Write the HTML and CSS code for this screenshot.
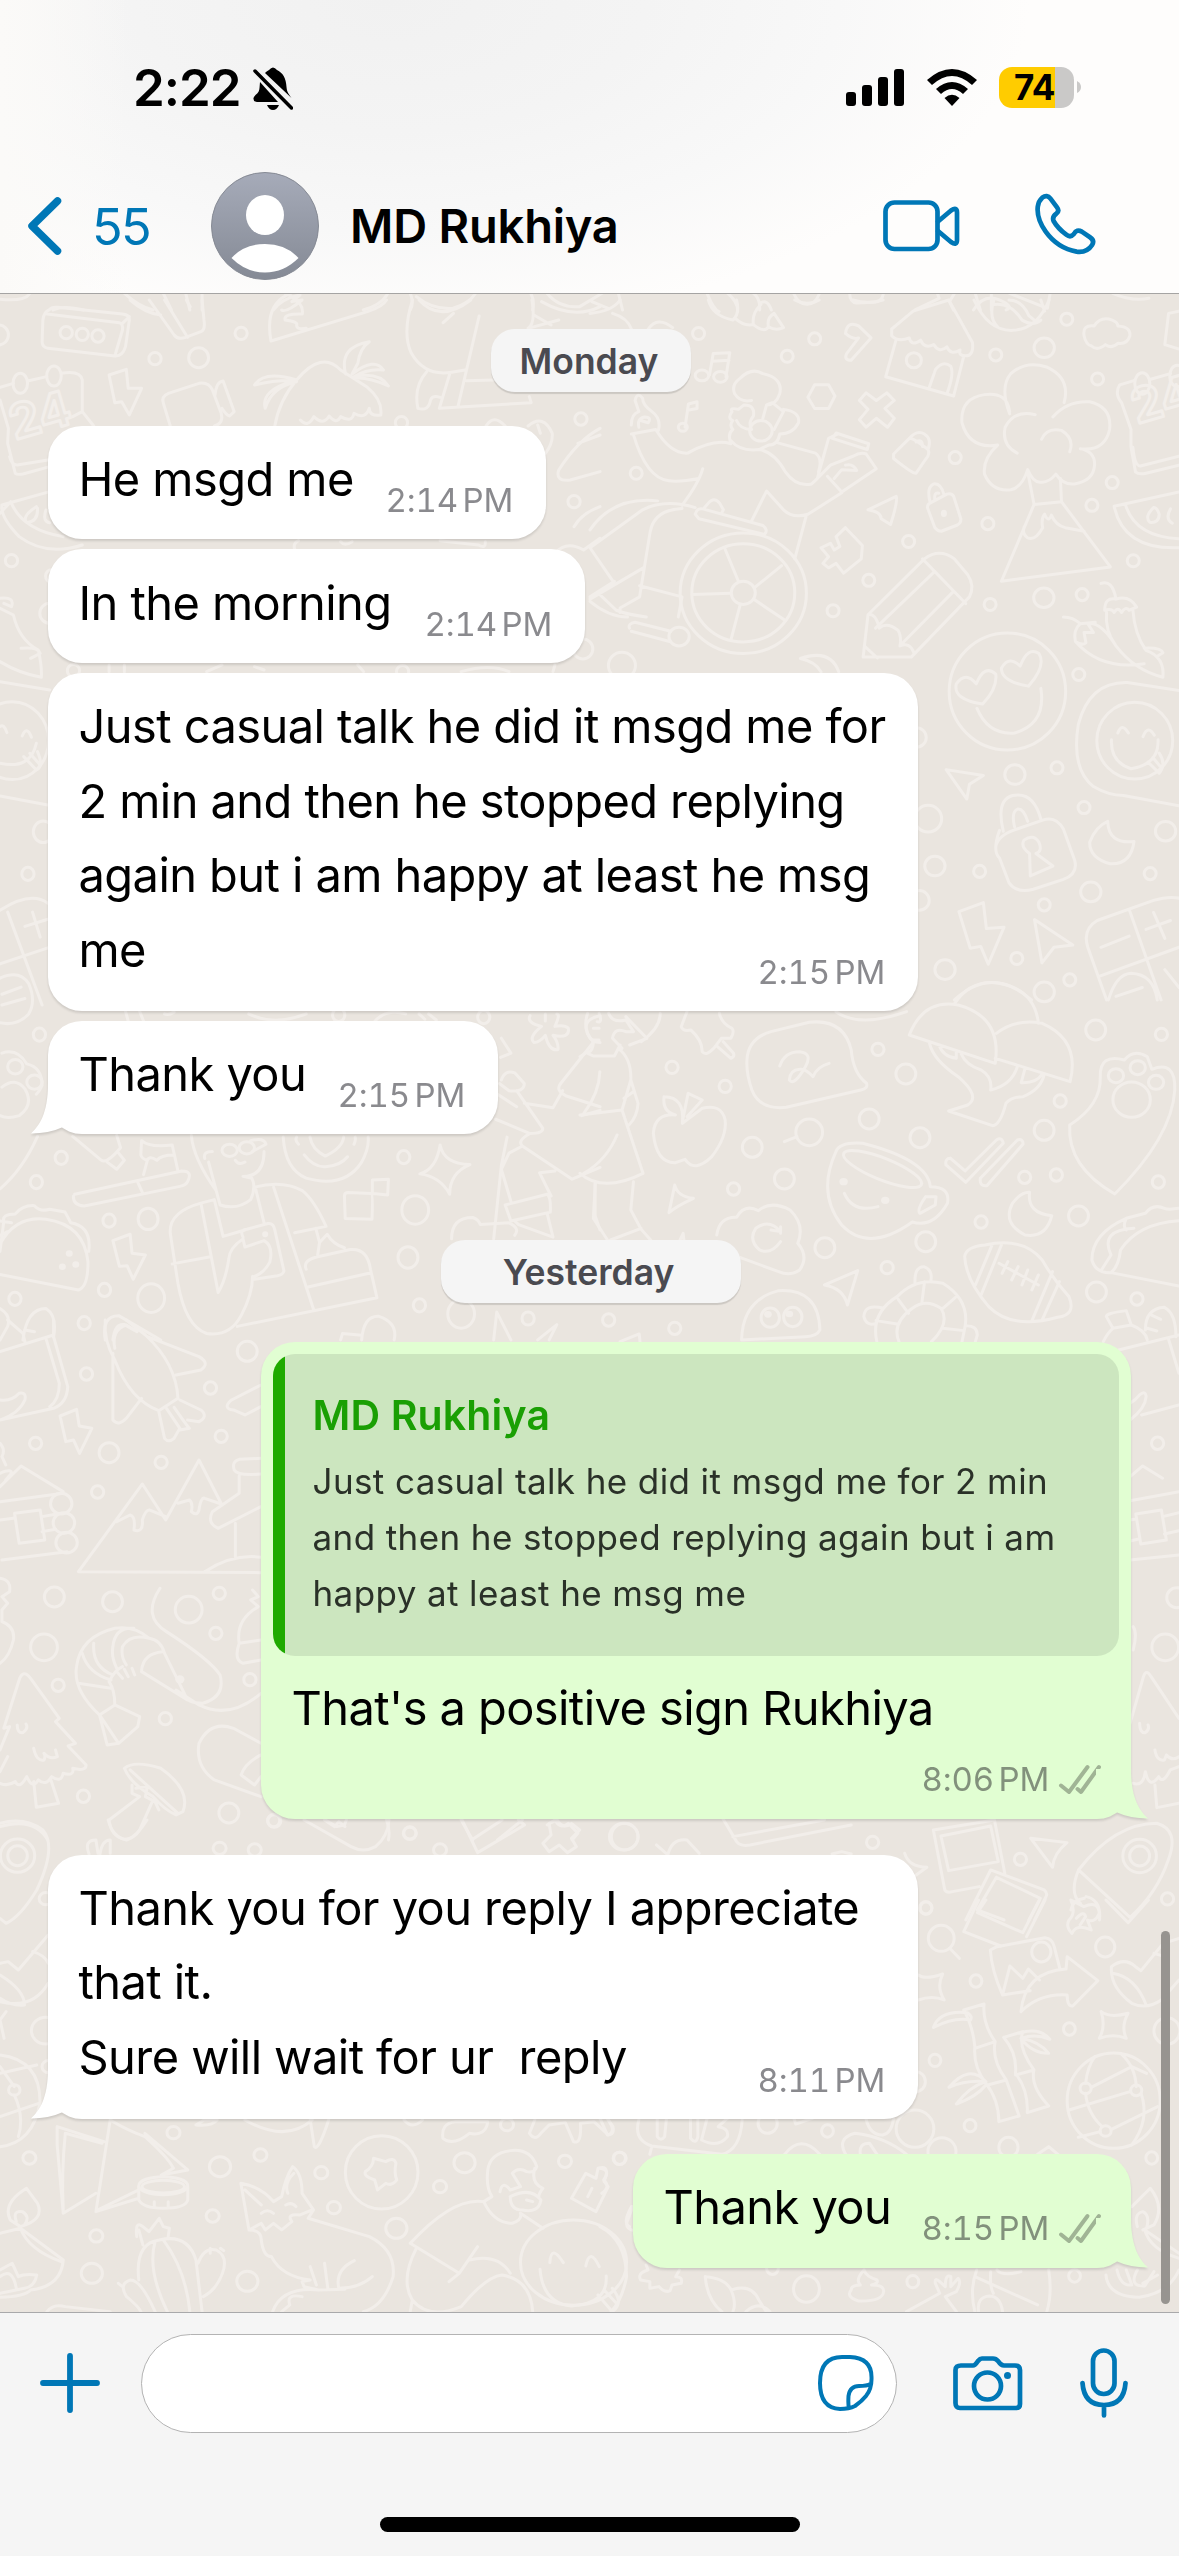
FILE: index.html
```html
<!DOCTYPE html>
<html lang="en">
<head>
<meta charset="utf-8">
<title>MD Rukhiya</title>
<link rel="stylesheet" href="styles.css">
</head>
<body>
<div class="screen">
  <header class="top">
    <div class="status">
      <span class="clock">2:22</span>
      <svg class="bell" viewBox="0 0 40 43" width="40" height="43"><path d="M12 6C14 4 15 3.500 16 3Q20-2 24 3C30 6 33 11 33.500 20C34 26 36 27 38.500 31ZM7 15L25 35H4Q0 35 .5 31C3 26 6 27 6.500 21ZM14 38H26Q24 43 20 43T14 38Z"/><path class="slash" d="M2 4L38.500 41"/></svg>
      <svg class="signal" viewBox="0 0 58 37" width="58" height="37"><rect y="23" width="10" height="14" rx="3"/><rect x="16" y="16" width="10" height="21" rx="3"/><rect x="32" y="8" width="10" height="29" rx="3"/><rect x="48" width="10" height="37" rx="3"/></svg>
      <svg class="wifi" viewBox="0 0 50 37" width="50" height="37"><path d="M0 11Q25-11 50 11L45 16Q25-2 5 16ZM9 20Q25 6 41 20L36 25Q25 15 14 25ZM17.500 29Q25 22.500 32.500 29L25 37Z"/></svg>
      <div class="battery"><span class="battery-label">74</span></div>
      <svg class="nub" viewBox="0 0 4 12" width="4" height="12"><path d="M0 0Q4 2 4 6T0 12Z"/></svg>
    </div>
    <div class="nav">
      <svg class="back" viewBox="0 0 34 58" width="34" height="58"><path d="M29.500 4L4 29L29.500 54"/></svg>
      <span class="count">55</span>
      <svg class="avatar" viewBox="0 0 108 108" width="108" height="108">
        <defs><linearGradient id="av" x2="0" y2="1"><stop stop-color="#a6abb9"/><stop offset="1" stop-color="#858a95"/></linearGradient></defs>
        <circle cx="54" cy="54" r="53.500" fill="url(#av)" stroke="#868a94"/>
        <ellipse cx="54" cy="43" rx="19" ry="20" fill="#fff"/>
        <path d="M20.500 86Q33 72 54 72T87.500 86Q73 100.500 54 100.500T20.500 86Z" fill="#fff"/>
      </svg>
      <span class="name">MD Rukhiya</span>
      <svg class="line-icon video" viewBox="883 198 77 52" width="77" height="52"><rect x="885.500" y="200.500" width="52" height="46.500" rx="9"/><path d="M938 219.500L951 208.500Q957 204.500 957 210.500V238Q957 244 951 240L938 229"/></svg>
      <svg class="line-icon phone" viewBox="1034 193 63 63" width="63" height="63"><g transform="matrix(.3438 0 0 .3333 640 0)"><path d="M1157 620Q1159 603 1170 593Q1184 582 1194 596L1213 622Q1221 633 1211 641Q1198 651 1203 663Q1215 685 1240 704Q1252 714 1262 702Q1270 686 1285 695L1309 712Q1323 722 1315 735Q1300 759 1270 755Q1215 745 1180 695Q1153 655 1157 620Z"/></g></svg>
    </div>
  </header>

  <main class="chat">
    <svg class="doodles" viewBox="0 294 1179 2018" width="1179" height="2018" aria-hidden="true">
      <defs>
        <ellipse id="s" rx="16" ry="18.500"/><ellipse id="m" rx="26" ry="30"/><ellipse id="l" rx="35" ry="40"/>
        <ellipse id="s4" rx="16" ry="13.500"/><ellipse id="m4" rx="27" ry="22"/>
        <path id="bolt" d="M0 17L45 0L50 57L85 57L53 137L33 97L15 100Z"/>
      </defs>
      <g transform="matrix(.4082 0 0 .3333 0 0)">
        <path d="M0 898Q60 905 72 882M130 930Q155 915 205 930M305 880Q340 920 375 930M400 880L420 930M455 880L465 930M495 880V930M670 930Q690 895 735 885L715 905L740 900Q700 940 690 930M890 930Q935 915 950 880M1005 880Q1015 910 1005 930M1020 890Q1060 930 1110 925Q1150 910 1165 880M1300 880Q1310 900 1305 930M1340 880Q1370 925 1420 920L1475 880M1450 905L1490 925M1515 880L1525 930"/>
      </g>
      <g transform="matrix(.3438 0 0 .3333 640 0)">
        <path d="M195 880Q215 930 230 935M255 880Q285 905 284 935M330 880Q350 895 348 930M350 910Q370 895 382 930M447 880Q460 912 485 913T522 880M610 880Q610 907 630 909L680 907Q705 905 708 880M800 930L870 895L865 880M915 880L900 905L912 930M975 880L990 930M970 930Q1000 880 1045 900T1065 930M1022 880V930M1075 880L1185 925L1193 880M1375 880Q1430 905 1480 895"/>
      </g>
      <g transform="matrix(.3827 0 0 .3333 0 300)">
        <path d="M128 30Q115 35 112 60L110 125Q110 140 125 145L300 168Q320 170 328 140L338 60Q340 45 320 42L150 22Q135 20 128 30ZM123 42L312 68Q322 70 320 90L300 168M320 70L338 50"/>
        <path d="M340 0Q380 40 420 45M390 0L455 105Q465 120 485 112L525 95Q537 90 533 60L528 0M430 0L490 112M487 0L497 20M708 123Q690 10 760-20M708 123L960 35Q1000 20 1010 0M745-20Q795 5 790 42Q740 40 745 60Q780 65 775 75Q775 90 800 85"/>
        <path d="M0 262L35 250M72 243L122 230M160 220Q210 210 215 240V335L245 378M0 300L22 385L20 430L40 520Q45 525 60 522L130 500M25 470Q30 495 45 495L125 480M190 350L215 335"/>
        <ellipse cx="53" cy="250" rx="19" ry="30"/><ellipse cx="141" cy="228" rx="19" ry="30"/>
        <use href="#bolt" x="285" y="208"/>
        <path d="M445 378L427 310Q420 290 440 280L520 250Q545 245 555 270L578 340Q585 370 560 378M562 285Q565 245 583 243L612 335L600 348Q590 345 580 325"/>
        <path d="M718 378Q730 300 775 240Q840 150 890 210L960 262Q1000 300 995 345Q965 350 965 325Q955 360 925 340Q920 370 890 350Q880 375 860 348Q845 378 820 350Q805 385 785 360M903 222Q885 140 965 125Q940 145 935 190L920 222Q980 170 1002 210Q960 205 925 230Q990 215 1015 258Q960 230 925 235M775 240Q690 210 665 255Q720 240 770 242Q680 270 693 325Q710 260 775 245"/>
        <path d="M1078 0Q1050 100 1075 160Q1110 230 1180 217L1215 210M1095 0Q1150 70 1230 0M1158 68L1185 40M1252 48L1197 318M1175 222L1148 325L1388 308L1383 290M1115 215Q1080 260 1092 325Q1120 335 1125 300Q1130 285 1150 292M1218 242L1290 240M1390 0Q1400 70 1380 85L1460 60M1395 45L1440 75M1415 5Q1500 60 1568 20"/>
        <path d="M1568 385Q1510 420 1460 510Q1450 545 1490 540L1568 515M1510 430L1568 405M1380 378Q1420 340 1443 400Q1445 430 1425 460M1405 375L1412 400M1500 680Q1520 640 1568 620M1450 760Q1480 720 1525 750L1568 715M1270 378Q1290 340 1320 378"/>
        <path d="M5 615Q0 650 50 710Q120 770 215 735M5 615L130 575M0 640L28 605M30 610Q60 690 165 710M95 620Q55 650 70 668Q100 665 98 625M120 630Q110 665 130 668"/>
        <path d="M0 895Q40 890 30 920L10 910M0 925L35 945Q50 1020 100 1050Q110 1100 108 1132Q50 1120 0 1085M55 1045Q100 1040 105 1060L80 1075M0 1145L130 1170M770 748Q765 730 780 722M890 725Q900 740 920 725M1150 722L1250 735Q1270 748 1268 725M285 1095V1115M325 1095V1115M540 1115L580 1095M665 1100L690 1110M935 1095L950 1115M1205 1115Q1280 1090 1330 1115M1450 1095L1445 1115"/>
        <ellipse cx="32" cy="1322" rx="95" ry="117"/><path d="M0 1280Q10 1270 18 1298M58 1308Q70 1275 82 1312M0 1390Q80 1410 95 1330M62 1370L95 1410Q115 1400 98 1355M78 1360L105 1395"/>
        <use href="#s" x="173" y="98"/><use href="#s" x="215" y="103"/><use href="#s" x="256" y="108"/><use href="#s" x="630" y="100"/><use href="#s" x="405" y="176"/><use href="#m" x="519" y="173"/><use href="#s" x="1518" y="357"/><use href="#s" x="1049" y="368"/><use href="#s" x="1500" y="605"/><use href="#s" x="30" y="782"/><use href="#s" x="192" y="1112"/><use href="#s" x="1052" y="1115"/><use href="#m" x="1523" y="1047"/><use href="#m" x="-4" y="105"/><use href="#m" x="130" y="940"/><use href="#s" x="135" y="828"/>
      </g>
      <text class="digits" x="15" y="440" transform="rotate(-16 15 440)">24</text>
      <text class="digits" x="1137" y="424" transform="rotate(-16 1137 424)">24</text>
      <g transform="matrix(.3757 0 0 .4464 590 300)">
        <path d="M315 0Q325 35 380 45Q400 30 390 0M385 40Q410 60 435 55Q430 30 455 10M435 55Q465 75 475 60Q470 40 490 30L515 62Q495 70 475 60M0 30Q60 25 80 0M60 30Q100 40 110 65M155 65Q180 35 220 62M545 0Q580 15 610 0M700 0Q740 10 780 0"/>
        <path d="M318 168L328 120L372 118L362 172M325 137L370 135"/><ellipse cx="298" cy="169" rx="18" ry="12"/><ellipse cx="347" cy="172" rx="18" ry="12"/>
        <path d="M253 285L262 233L285 228V243L260 247"/><ellipse cx="247" cy="285" rx="12" ry="9"/>
        <path d="M680 75Q685 45 715 58L748 85L695 135Q675 135 683 120L715 85Q700 90 680 75M580 218L598 190H635L652 215L635 243H598Z"/>
        <path d="M717 225L735 208L762 225L790 208L810 225L785 243L810 265L792 285L762 265L735 285L717 268L740 245Z"/>
        <path d="M808 345L850 310Q858 308 900 335Q905 345 895 355L868 388Q860 390 808 355ZM850 310Q870 290 890 300Q910 310 900 335M868 318Q885 310 885 328"/>
        <path d="M905 455L950 435Q962 432 968 440L987 490Q988 500 978 504L935 518Q925 518 918 510L898 465Q898 458 905 455M905 452Q895 420 915 412Q935 410 943 438M918 448Q915 430 928 433"/><circle class="solid" cx="942" cy="478" r="8"/>
        <path d="M803 65L860 25L955 0L1018 95Q1022 125 1000 125Q980 125 985 112Q960 125 950 105Q930 120 915 100Q890 110 880 90Q855 105 850 85Q820 95 803 80ZM815 88L787 172L968 215L995 125M902 198L920 155Q940 135 960 148Q970 165 950 210"/><ellipse cx="862" cy="135" rx="20" ry="17"/>
        <path d="M1022 0Q1060 70 1125 68T1222 0M1075 0Q1060 40 1085 60M1075 10Q1120 5 1150 45Q1180 60 1200 45M1115 0Q1150 0 1168 35L1190 50M1200 0L1210 25"/>
        <path d="M1315 80Q1310 55 1342 58Q1360 35 1390 45Q1405 50 1405 58Q1440 60 1437 80Q1430 100 1405 97Q1390 110 1372 100Q1350 115 1335 103Q1320 100 1315 80M1530 100L1540 30L1568 25M1530 100L1568 110"/>
        <path d="M1117 255Q1090 195 1120 165Q1160 135 1215 150Q1280 175 1262 230M1117 250Q1110 205 1050 212Q985 220 990 275Q1010 335 1085 325M1232 262Q1270 225 1330 228Q1390 240 1383 290Q1370 340 1305 333M1137 343Q1095 325 1105 285Q1130 245 1185 257M1202 312Q1215 285 1255 292Q1290 310 1277 340M1085 325Q1045 355 1050 390Q1070 430 1120 425Q1150 420 1165 380Q1180 410 1200 408Q1220 410 1240 390Q1260 415 1290 412Q1340 405 1343 370Q1345 340 1305 333"/>
        <path d="M1165 385L1182 458L1095 630L1385 598L1255 452L1252 400M1182 458L1255 452M1210 480Q1200 490 1205 510Q1185 540 1165 533Q1145 520 1160 502M1210 480Q1220 500 1228 482Q1240 505 1265 510L1315 518"/>
        <path d="M1450 180L1410 190Q1395 210 1415 230L1440 290V330L1452 385Q1460 392 1480 388L1568 370M1445 330Q1450 372 1465 372L1568 350M1490 178L1545 165"/>
        <path d="M1395 462L1568 430M1395 462Q1420 560 1568 555M1425 458Q1450 530 1568 535M1500 465Q1475 485 1490 498Q1515 500 1515 480Q1510 465 1500 465M1545 468Q1530 490 1550 500"/>
        <path d="M110 300L175 290Q215 345 260 343Q330 310 375 322M115 300Q150 400 210 405Q240 408 290 400M300 378Q290 410 245 460M110 280Q110 255 130 250L120 225Q125 205 140 220Q140 235 165 250Q190 265 182 292M130 285Q125 265 145 262Q165 262 155 275L135 270M375 320Q365 300 380 290Q370 280 380 270Q365 265 378 250Q370 240 395 245L410 235Q440 235 435 260Q420 275 430 290Q400 290 390 270M375 315Q400 340 450 335M385 210Q375 190 400 175Q430 150 460 165Q515 175 505 210Q495 235 470 235L460 265M385 210Q400 230 430 225M470 235L485 230L515 250L490 290M515 245Q560 250 555 275Q540 300 505 300Q500 325 475 325L450 335M450 335Q490 340 520 385Q550 420 590 412L605 400L635 310L660 300M500 320L600 343Q620 355 608 385M605 400L640 370L700 350Q720 340 735 345L762 378L670 430L632 395M655 298L742 322L738 335L645 310ZM650 400L670 380L710 382Q700 365 680 370"/><ellipse cx="455" cy="293" rx="30" ry="23"/>
        <path d="M0 555L140 470Q200 445 280 465M0 515Q60 440 180 450M0 555L65 635M0 670L142 600M20 655L70 695Q100 705 150 710M0 675Q50 710 100 710M65 630L0 665M160 520Q170 470 245 467M160 520L132 665L80 690V700M132 640L245 665L235 710M280 480Q285 465 300 468L460 505Q475 515 465 525L290 490ZM305 465L315 455Q330 440 345 455L355 470L350 478M430 495L470 428L515 470Q540 490 580 480L670 432M575 485L545 580M105 735Q100 725 120 722L215 742M110 742L212 765"/><ellipse cx="408" cy="657" rx="168" ry="135"/><ellipse cx="408" cy="656" rx="137" ry="110"/><ellipse cx="408" cy="656" rx="32" ry="26"/><ellipse cx="237" cy="754" rx="27" ry="21"/>
        <path d="M272 660L375 657M358 555L395 630M437 645L510 595M435 670L520 718M400 682L375 762"/>
        <path d="M740 470L815 440Q820 450 800 503L775 490Q775 475 740 470M615 555L640 545L650 560L665 552L655 530L680 510L725 550L722 580L675 612L655 590L635 600L620 590L635 575Z"/>
        <path d="M727 800L740 705L890 580Q930 555 970 580L1005 615Q1025 640 1010 665L855 800ZM885 580L1000 680M915 610L760 735M965 655L830 770M740 705Q760 700 770 735Q790 720 820 740Q830 755 825 775Q850 765 862 790M730 775L765 802"/>
        <ellipse cx="1111" cy="877" rx="155" ry="131"/><path d="M1030 915Q1060 975 1130 970Q1215 950 1200 870M1045 905Q965 895 975 860Q1000 830 1028 860Q1050 815 1080 838Q1085 870 1045 905M1167 865Q1095 855 1095 825Q1115 795 1145 820Q1165 775 1195 792Q1215 820 1167 865"/>
        <path d="M1360 635Q1390 625 1400 670Q1370 665 1370 695Q1390 690 1395 700Q1405 685 1415 700Q1425 685 1435 695L1455 688Q1435 660 1400 670M1445 695Q1450 750 1480 785Q1530 800 1525 845Q1450 830 1400 775Q1370 740 1375 700M1475 780Q1520 778 1525 790L1510 798M1260 710Q1285 710 1305 725Q1285 740 1292 765Q1310 775 1320 768L1315 745L1340 745L1325 725Q1360 720 1400 775M1292 765Q1360 830 1475 815M1305 725L1345 722"/>
        <path d="M1568 875L1430 857Q1330 855 1300 950Q1280 1050 1340 1090Q1380 1110 1420 1110L1568 1133"/><ellipse cx="1450" cy="987" rx="101" ry="86"/><path d="M1388 985Q1385 1035 1440 1050Q1515 1040 1512 985M1405 970Q1415 945 1433 970M1472 978Q1485 950 1502 975M1485 1035L1515 1060Q1535 1040 1515 1015M1498 1025L1518 1045"/>
        <path d="M948 1052L1047 1065L1010 1085L1003 1118ZM1090 1188Q1070 1235 1090 1250L1115 1305Q1135 1330 1180 1320L1260 1298Q1300 1285 1290 1255L1260 1185Q1240 1155 1205 1165L1130 1187Q1085 1200 1080 1225M1100 1190Q1080 1120 1125 1110Q1180 1100 1200 1163M1130 1180Q1120 1145 1140 1140Q1155 1140 1165 1168M1170 1240Q1145 1225 1155 1210Q1180 1195 1195 1215Q1205 1235 1187 1240L1232 1268L1172 1290ZM1378 1168Q1380 1220 1448 1213Q1440 1265 1385 1263Q1330 1250 1330 1215Q1345 1180 1378 1168"/>
        <path d="M982 1370L1047 1350L1055 1408L1102 1405L1060 1488L1040 1448L1012 1452ZM1183 1388L1285 1445L1235 1450L1203 1485ZM1568 1340Q1540 1335 1500 1345L1350 1390Q1310 1410 1325 1450L1375 1568M1435 1365L1520 1568M1355 1515L1568 1450M1360 1450L1435 1425M1480 1410L1545 1390M1500 1372L1530 1430M1530 1500L1568 1540M1380 1568Q1400 1510 1440 1508Q1500 1510 1510 1568M1400 1560L1470 1540M970 1568Q1070 1490 1175 1568M560 803Q640 780 662 833M560 803Q600 810 615 833"/>
        <use href="#s4" x="289" y="75"/><use href="#s4" x="598" y="87"/><use href="#s4" x="525" y="126"/><use href="#s4" x="123" y="388"/><use href="#s4" x="972" y="353"/><use href="#s4" x="848" y="541"/><use href="#s4" x="742" y="628"/><use href="#s4" x="647" y="696"/><use href="#s4" x="1269" y="43"/><use href="#s4" x="1080" y="123"/><use href="#m4" x="1209" y="107"/><use href="#s4" x="1351" y="177"/><ellipse cx="1470" cy="187" rx="20" ry="24"/><ellipse cx="1563" cy="170" rx="20" ry="24"/><use href="#s4" x="1390" y="409"/><use href="#s4" x="1336" y="460"/><use href="#s4" x="1059" y="501"/><use href="#s4" x="1446" y="584"/><use href="#s4" x="1065" y="682"/><use href="#m4" x="1208" y="667"/><use href="#s4" x="1310" y="660"/><use href="#s4" x="1301" y="839"/><use href="#m4" x="1131" y="1063"/><use href="#s4" x="1243" y="1048"/><use href="#s4" x="1315" y="1137"/><use href="#m4" x="1532" y="1190"/><use href="#s4" x="1491" y="1285"/><use href="#m4" x="1333" y="1326"/><use href="#s4" x="1037" y="1280"/><use href="#s4" x="1209" y="1355"/><use href="#s4" x="1136" y="1475"/><use href="#m4" x="945" y="1500"/><use href="#m4" x="1209" y="1550"/><use href="#s4" x="1277" y="1523"/><use href="#m4" x="918" y="1268"/><ellipse cx="900" cy="1162" rx="36" ry="30"/><ellipse cx="85" cy="819" rx="36" ry="30"/><use href="#m4" x="876" y="1345"/><use href="#m4" x="868" y="980"/>
      </g>
      <g transform="matrix(.3827 0 0 .3571 0 780)">
        <path d="M328 648L335 675M365 648L375 675M650 655Q715 690 800 655M980 675Q1010 640 1060 655M1095 655L1110 670M1120 655L1140 672M430 655Q440 660 455 650"/>
        <path d="M1385 660Q1375 680 1415 690Q1380 720 1395 735Q1410 735 1425 715Q1435 760 1458 755Q1460 735 1445 715Q1490 725 1485 695Q1475 685 1450 690Q1465 655 1455 655M1425 655V675M1310 723L1335 765L1308 777M1550 735L1465 850Q1450 870 1480 885L1568 915M1568 660Q1520 670 1535 710Q1545 735 1568 735M1310 840Q1320 810 1345 820L1370 850Q1370 875 1330 870L1305 850M1295 950L1385 990Q1420 990 1418 975L1350 870M1300 880L1350 915M1370 905L1445 918L1470 870M1385 990Q1350 1010 1365 1025L1495 1118L1568 1085M1325 1000L1310 1080L1290 1285M1365 1025L1330 1045L1310 1090L1335 1180M1410 1100L1440 1165M1410 1100L1450 1095M1320 1190L1430 1160Q1440 1170 1438 1210L1335 1235ZM1345 1235L1355 1245L1445 1280L1430 1215M1555 1130V1220L1568 1260M1520 940L1568 925"/>
        <path d="M500 995Q505 1060 565 1150M535 1060Q530 1040 555 1040M545 1070L575 1190Q620 1205 655 1175Q670 1140 658 1115L635 1110Q690 1110 690 1040M615 1065Q625 1080 640 1070M660 1040L695 1020Q690 1000 655 1010"/><ellipse cx="600" cy="1037" rx="20" ry="17"/><ellipse cx="645" cy="1030" rx="20" ry="17"/>
        <path d="M740 1000Q745 1090 800 1115Q900 1145 945 1070Q965 1030 962 1000M775 1000Q770 1010 780 1020M795 1050Q820 1085 850 1083Q890 1080 908 1055M925 1020Q930 1010 928 1000M810 1000Q815 1035 850 1053Q895 1030 898 1000M190 998L265 1065Q280 1075 315 1030L305 995M280 1070L305 1090L325 1065L310 1045M375 1105L385 1065Q370 1060 368 1050L370 1010Q390 1030 450 1022L465 1095M385 1065Q390 1050 410 1065Q420 1050 455 1050"/>
        <path d="M195 1160L475 1095Q505 1095 490 1125Q485 1135 470 1138L220 1193Q190 1190 192 1165M358 1122L372 1155M98 998Q60 1090 0 1145"/>
        <path d="M0 1320L10 1235Q5 1215 40 1215Q60 1190 90 1192Q105 1210 130 1202L170 1210L185 1240Q240 1250 232 1320M0 1235L30 1240M0 1300Q40 1220 120 1230Q220 1245 230 1350Q230 1420 205 1428L0 1385M0 1275L20 1265"/><circle class="solid" cx="181" cy="1326" r="9"/><circle class="solid" cx="163" cy="1363" r="9"/><circle class="solid" cx="198" cy="1357" r="9"/>
        <path d="M295 1290L340 1272L345 1325L380 1330L348 1398L332 1360L312 1362ZM525 1185Q440 1210 445 1270L465 1410Q485 1530 540 1550Q600 1560 630 1500Q660 1440 660 1390M525 1185L570 1435Q590 1400 598 1340Q600 1310 635 1285M525 1185L560 1175L583 1278L640 1260M668 1145L690 1240M665 1140Q740 1120 790 1150Q820 1175 852 1250L770 1268M715 1140L820 1485M450 1355L550 1335M635 1280Q625 1260 645 1258L700 1242Q715 1240 718 1260L742 1375Q740 1385 725 1388L665 1398M635 1285L640 1308L690 1290Q715 1305 705 1350Q690 1380 665 1390M620 1530L985 1450L968 1370Q960 1310 915 1315L830 1335Q790 1345 800 1370M805 1420L970 1380M830 1330L835 1295L855 1272Q870 1300 900 1310M825 1255L835 1295"/>
        <path d="M900 1165Q900 1155 910 1155L970 1158Q975 1160 972 1230L902 1228ZM973 1158V1120L1015 1118L1013 1162L975 1158M1150 1022Q1160 1075 1228 1077Q1175 1100 1175 1160Q1150 1110 1097 1103Q1140 1090 1150 1022M1180 1285Q1180 1225 1235 1225Q1250 1230 1255 1245L1330 1240Q1360 1255 1345 1275"/>
        <ellipse cx="693" cy="1272" rx="4" ry="4"/><path d="M275 1568Q265 1500 310 1500L420 1568M295 1568Q300 1520 325 1525L350 1540M60 1568Q70 1480 120 1480Q150 1500 140 1560M0 1480Q30 1500 20 1530L0 1568M890 1568L895 1550L945 1555M945 1568Q950 1500 990 1502Q1040 1520 1030 1568M1290 1568L1298 1490L1335 1568M1405 1568L1455 1525L1435 1568"/>
        <path d="M20 370L110 630M65 410L125 390M85 370L105 440M0 515L125 470M0 555Q50 530 75 570Q95 620 75 655Q45 690 0 680M5 600L55 580M5 630L65 612M0 365Q80 310 125 345M0 45L125 70"/>
        <path d="M5 765Q45 750 70 795Q110 805 110 855Q105 870 95 880M5 860Q40 830 65 865Q90 910 50 940Q20 950 0 940"/><ellipse cx="40" cy="803" rx="20" ry="20"/><ellipse cx="90" cy="846" rx="20" ry="20"/>
        <use href="#s" x="885" y="658"/><use href="#s" x="1264" y="664"/><use href="#s" x="160" y="1058"/><use href="#s" x="95" y="1126"/><use href="#s" x="285" y="1234"/><use href="#m" x="387" y="1229"/><use href="#s" x="1055" y="1056"/><use href="#l" x="1085" y="1204"/><use href="#m" x="1066" y="1337"/><use href="#l" x="1205" y="1495"/><use href="#s" x="1380" y="1508"/><use href="#s" x="1096" y="1471"/><use href="#l" x="395" y="1451"/><use href="#s" x="273" y="1428"/><use href="#s" x="220" y="1521"/><use href="#s" x="39" y="1453"/><use href="#s" x="103" y="713"/><use href="#s" x="73" y="263"/><use href="#m" x="113" y="145"/>
      </g>
      <g transform="matrix(.382 0 0 .3333 580 980)">
        <path d="M20 100Q5 150 35 185Q35 210 20 220L35 228H90L105 195M50 100Q60 130 45 125M75 100Q85 130 120 120L140 155L120 155Q90 140 85 175L110 205M120 110L175 175L130 195M210 100Q210 145 160 185M35 145H50M35 180H50M0 230L20 215M100 205Q135 235 133 300L110 390L0 405M133 300L152 370Q150 410 128 435M115 355L140 335M110 390L165 580Q60 640 0 580M52 275Q50 340 10 400M97 465Q70 540 10 580M40 610L35 715L72 780M140 605L133 690L160 748L185 780M160 745L80 780"/>
        <path d="M280 95L265 140Q270 155 290 150Q320 180 320 215Q330 230 350 205L370 175L395 175Q405 155 398 145Q370 130 365 100M360 200L395 235Q405 230 402 220L375 185"/>
        <path d="M220 350Q215 395 250 405Q195 400 192 460Q200 550 250 548L275 538Q300 580 345 530Q385 470 380 420Q370 370 320 385L268 430Q275 350 220 350M268 425L283 340L320 360L280 410"/>
        <path d="M437 240Q440 175 500 155L600 127Q690 115 710 210Q715 280 750 310Q755 325 735 330L540 382Q470 390 450 330Q435 280 437 240M523 258Q535 215 575 215Q610 220 590 260Q560 320 548 300Q550 270 575 268Q590 265 610 290Q620 260 652 250"/>
        <path d="M862 165Q900 55 990 75Q1105 110 1087 250ZM980 72Q1020 0 1090 8Q1190 25 1200 130M1090 160Q1140 115 1210 130Q1310 180 1283 305L1087 235M915 190Q925 240 990 290Q1050 350 1015 375L965 393L1080 437Q1100 435 1115 370Q1130 350 1160 350Q1205 330 1215 285M998 222Q1010 255 1050 270Q1080 290 1075 330Q1130 315 1145 260M940 195Q950 230 985 235V212M1165 265L1155 308Q1195 310 1210 282M670 95Q730 145 855 95"/>
        <path d="M1282 435Q1365 375 1362 290Q1360 220 1425 240Q1450 205 1485 230L1497 268Q1560 240 1557 330Q1550 470 1400 642Q1275 560 1282 435"/><ellipse cx="1403" cy="287" rx="20" ry="21"/><ellipse cx="1460" cy="263" rx="20" ry="21"/><ellipse cx="1508" cy="307" rx="20" ry="21"/><ellipse cx="1444" cy="359" rx="49" ry="53"/>
        <path d="M970 535L1008 573L1090 480Q1105 470 1108 490L1010 607L958 555Q955 535 970 535M1048 595L1145 480Q1160 475 1160 492L1065 617Q1045 620 1048 595M870 726Q755 820 685 735Q620 640 670 515Q680 485 740 490Q910 540 917 620Q970 620 962 670Q925 745 870 726M905 650H932L930 675L890 700Q880 690 905 650M692 640Q715 700 780 680"/><ellipse cx="792" cy="567" rx="112" ry="32" transform="rotate(25 792 567)"/><circle class="solid" cx="690" cy="605" r="11"/><circle class="solid" cx="799" cy="661" r="11"/>
        <path d="M248 615Q255 650 297 655Q250 680 233 698ZM1177 637Q1170 700 1235 707Q1220 775 1165 765Q1105 730 1132 670Q1155 635 1177 637M358 765Q365 710 410 712Q430 670 467 692Q500 660 550 690Q590 735 570 790Q600 830 575 870Q550 890 520 875L420 833M525 785Q500 825 470 810Q440 780 460 745Q495 715 525 755L500 750M525 740V760M640 915L727 872L700 975Q690 925 640 915M262 780L270 760L272 780"/>
        <path d="M423 1080Q425 960 520 932Q625 925 628 1050Q620 1070 590 1070ZM105 1085L155 1062L157 1085"/><ellipse cx="498" cy="1013" rx="24" ry="29"/><ellipse cx="557" cy="1011" rx="24" ry="29"/><circle class="solid" cx="492" cy="1003" r="10"/><circle class="solid" cx="548" cy="1002" r="10"/>
        <path d="M777 1085Q760 1000 830 950Q880 890 950 910Q1020 960 1008 1040L1000 1085M835 1085Q815 1030 870 985Q905 955 945 985Q970 1030 920 1085M833 958L860 1000M902 905L895 968M983 952L950 985M775 1022L830 1032M950 1045L1005 1052M877 910Q875 860 900 860Q925 870 918 905M795 985Q745 970 743 1010Q750 1040 775 1030M1008 1038Q1040 1035 1040 1065L1035 1085"/>
        <path d="M1007 830Q1010 800 1060 795Q1160 770 1210 840Q1240 900 1280 950Q1300 1005 1250 1012Q1130 1050 1070 980Q1010 900 1007 830M1078 797L1035 915M1105 790L1050 945M1237 875L1182 1025M1255 905L1210 1020M1097 850L1200 915M1120 845L1105 880M1147 860L1130 900M1172 870L1157 915M1200 885L1183 930"/>
        <path d="M1568 685Q1540 690 1530 685Q1500 670 1480 700L1430 715Q1340 760 1340 840Q1350 880 1390 878Q1410 860 1415 810Q1460 730 1568 722M1390 878L1568 918M1450 745Q1360 750 1390 825L1365 870M1430 715Q1420 740 1430 750M1370 1085Q1380 1060 1395 1045L1378 1010Q1375 1000 1430 992L1443 1035L1395 1045M1443 1035Q1480 1050 1485 1080M1410 1110L1568 1065M1480 1050Q1480 985 1530 982Q1560 1000 1560 1070M1495 1005L1520 1018M1485 1045L1510 1053M1540 1075L1568 1180M1568 1275L1470 1305M1440 1270Q1455 1260 1465 1245Q1480 1230 1482 1250Q1480 1285 1440 1320M1440 1490L1473 1458L1525 1495"/>
        <use href="#s" x="241" y="262"/><use href="#s" x="380" y="319"/><use href="#s" x="780" y="208"/><use href="#m" x="853" y="282"/><use href="#l" x="600" y="457"/><path d="M535 485L568 470"/><use href="#m" x="451" y="502"/><use href="#m" x="757" y="417"/><use href="#m" x="890" y="473"/><use href="#m" x="535" y="597"/><use href="#s" x="402" y="627"/><use href="#s" x="1257" y="363"/><use href="#m" x="1215" y="451"/><use href="#s" x="1164" y="592"/><use href="#s" x="1247" y="585"/><use href="#s" x="1514" y="606"/><use href="#s" x="1050" y="726"/><use href="#m" x="1305" y="708"/><use href="#m" x="905" y="785"/><use href="#m" x="641" y="803"/><use href="#s" x="804" y="863"/><use href="#m" x="1352" y="936"/><use href="#s" x="1458" y="957"/><use href="#s" x="75" y="1020"/><use href="#s" x="248" y="1045"/><use href="#m" x="1350" y="150"/><use href="#s" x="1522" y="163"/><use href="#s" x="1512" y="1390"/>
      </g>
      <g transform="matrix(.3827 0 0 .3333 0 1320)">
        <path d="M0 95L140 45M120 55L155 190Q155 240 130 260M140 50L177 200Q175 250 140 265L0 300M0 240Q30 245 50 220Q70 215 65 240Q50 280 0 300M65 65L60 40L20 0M140 45V0M65 30L90 35"/>
        <path d="M275 0Q270 60 300 120Q340 240 415 272L465 235Q460 130 380 45L330 0M300 85Q290 30 330 15L358 35M295 100V300Q310 320 330 295L370 235M385 50L520 110Q550 130 525 150L460 165M415 275L430 355Q440 370 455 355L470 325L435 265M455 262Q490 320 495 325L470 330M470 240L525 270Q545 290 520 305L490 300"/>
        <path d="M157 288L200 268L207 318L240 325L208 400L192 360L172 365ZM205 755L372 492L433 600L520 420L580 555M205 755L682 758M305 605L340 585Q355 590 350 630Q375 640 372 600Q380 570 390 570L433 590M465 550L495 540Q505 550 500 575Q515 590 520 570Q525 530 535 535L578 552M682 195L605 240Q580 265 610 270L640 285L682 260M682 415L625 418Q605 425 612 450Q620 468 682 462M625 468V520L555 575Q540 610 570 625L682 560M615 610V710M535 755Q610 700 682 712"/>
        <path d="M0 500L55 438L165 515M0 545L165 520M0 600L35 595M110 590L145 583M110 635L145 628M5 720L175 695M38 580L105 570L117 660L50 670ZM0 370Q15 390 5 410L15 435M0 460Q30 445 30 460L15 480M0 775Q30 780 25 815L5 830L20 850L5 870V905Q40 920 35 960Q25 1010 0 1030"/><ellipse cx="160" cy="551" rx="28" ry="31"/><ellipse cx="167" cy="609" rx="28" ry="31"/><ellipse cx="174" cy="668" rx="28" ry="31"/>
        <path d="M418 805Q370 890 435 935Q550 1020 575 1065Q590 1130 530 1150Q490 1150 480 1125M682 1120Q600 1200 520 1155L460 1110M425 995Q375 1000 370 1050M300 925Q210 950 200 1040Q190 1110 260 1185L300 1155Q300 1110 285 1085Q300 1050 320 1040M300 925Q350 915 390 955Q420 960 430 1000L490 1140L370 1055M390 955Q340 940 320 980Q315 1010 330 1035M350 925Q300 920 295 980Q290 1010 305 1045M245 970Q240 1040 295 1065M215 1000Q230 1060 290 1080M205 1090L290 1105M260 1185L280 1275L310 1270L260 1185M300 1155L365 1190L360 1220L310 1270M305 1055L320 1075M325 1048L335 1070M345 1045L352 1065"/><circle class="solid" cx="470" cy="1078" r="12"/>
        <path d="M10 1225L50 1080Q60 1045 80 1075L155 1195L145 1205L197 1270L178 1278L225 1335Q225 1355 190 1345Q195 1370 165 1360Q160 1390 135 1370Q120 1400 100 1380Q85 1410 70 1370Q50 1410 40 1385Q20 1400 0 1390M10 1225L25 1220L0 1290M20 1310L0 1355M45 1215Q45 1240 60 1238Q75 1225 68 1212M88 1285Q95 1325 115 1320Q120 1310 115 1300Q130 1320 150 1310L145 1290M88 1385L95 1462L153 1450L133 1380"/>
        <path d="M325 1345Q350 1320 420 1345Q500 1410 478 1475L460 1485Q430 1470 400 1430Q340 1390 325 1345M340 1350L465 1480M345 1395V1420L365 1430L285 1500Q290 1550 325 1558Q350 1558 365 1530L400 1440M355 1405L385 1400L380 1430L405 1445L415 1470M682 1270L610 1225Q550 1200 520 1270Q510 1340 560 1380L682 1430M682 1305Q640 1330 630 1365L665 1395L682 1370M660 810L675 830L655 840L675 860Q615 900 625 970L682 960M625 970Q610 1020 635 1030L682 1020"/>
        <path d="M0 1520Q90 1490 125 1560M1010 1500Q1020 1530 1015 1560M1205 1500L1235 1560M1365 1500L1300 1560M1430 1515L1450 1500Q1465 1530 1485 1510L1510 1540L1495 1560M850 1500L880 1520L900 1515L905 1500"/>
        <use href="#m" x="646" y="94"/><use href="#s" x="226" y="162"/><use href="#s" x="550" y="204"/><use href="#s" x="93" y="370"/><use href="#m" x="285" y="398"/><use href="#s" x="421" y="427"/><use href="#s" x="578" y="349"/><use href="#s" x="255" y="516"/><use href="#m" x="142" y="831"/><use href="#m" x="294" y="845"/><use href="#l" x="493" y="869"/><use href="#s" x="573" y="820"/><use href="#s" x="564" y="940"/><use href="#l" x="115" y="982"/><use href="#s" x="152" y="1096"/><use href="#s" x="653" y="1079"/><use href="#s" x="432" y="1196"/><use href="#s" x="218" y="1429"/><use href="#m" x="598" y="1479"/><use href="#s" x="715" y="1502"/><use href="#s" x="1071" y="1539"/>
      </g>
      <g transform="matrix(.382 0 0 .3333 580 1460)">
        <path d="M1440 122L1568 95M1440 180L1455 177M1525 170L1568 158M1440 243L1460 238M1530 222L1568 212M1440 300L1568 285M1455 162L1522 150L1535 240L1468 252ZM1448 500Q1460 520 1448 570M1440 790L1475 650Q1482 625 1495 650L1568 775M1465 790Q1465 820 1480 818Q1492 808 1487 795M1505 870Q1510 905 1530 900L1535 885Q1550 905 1568 890M1448 970Q1475 980 1480 935Q1490 990 1515 950Q1525 975 1545 930L1568 920M1505 975L1510 1043L1568 1030"/>
        <path d="M375 1078L410 1145Q420 1160 445 1155L710 1095M400 1130L640 1080M200 1155L230 1185Q240 1135 280 1140L312 1180M925 1110L1085 1080L1112 1240M925 1110L955 1290Q960 1300 975 1295L1045 1280M945 1128L1075 1098L1095 1205L965 1232ZM1075 1230L1215 1290Q1225 1300 1220 1310L1190 1380M1075 1230L1010 1380M1090 1252L1205 1315L1175 1380M1090 1252L1040 1350L1110 1380M850 1180Q860 1220 908 1222L880 1245M1180 1135L1275 1148Q1240 1180 1237 1222ZM1305 1230Q1400 1090 1510 1090Q1570 1110 1540 1200Q1510 1300 1440 1372L1305 1230Q1280 1300 1310 1330M1320 1315Q1290 1320 1285 1350M1325 1310Q1365 1320 1360 1380M660 1182L685 1175L710 1182"/><ellipse cx="1465" cy="1188" rx="44" ry="50"/><ellipse cx="1465" cy="1188" rx="26" ry="30"/>
        <use href="#l" x="117" y="1130"/><use href="#s" x="766" y="1147"/><use href="#s" x="1153" y="1198"/><use href="#s" x="905" y="1344"/><use href="#s" x="1538" y="1317"/><use href="#l" x="1532" y="562"/><use href="#m" x="1562" y="413"/>
      </g>
      <g transform="matrix(.4082 0 0 .3333 0 1820)">
        <path d="M0 10Q60-10 105 30Q140 80 90 210Q50 290 15 310L0 295M265 0Q275 50 310 60Q335 50 360 0M745 0L860 80Q890 100 920 80Q950 50 953 0M795 0L820 20L830 5L845 20M1132 0L1170 98L1285 15L1270 0M1155 60L1230 0M1345 10L1365 0Q1380 30 1400 10L1420 30L1400 55L1412 80L1390 98L1370 75L1345 95L1330 70L1350 45ZM218 102Q205 60 235 60L240 100M245 102Q250 60 270 60L270 100"/>
        <path d="M0 430L20 425L45 450L118 345M80 395Q110 405 118 430M0 465Q60 510 60 555Q30 560 0 535M0 545Q80 570 118 490M15 575L0 600L10 655M0 705Q100 720 98 850Q80 970 0 980M0 760L90 735M35 825Q60 890 45 950M0 890L95 850M0 740L35 800"/>
        <path d="M140 920V975L155 1180L235 1120M140 920L255 965M160 940L250 970M160 940Q150 1060 155 1170M270 900L235 1175L340 1135M270 900Q310 930 355 950Q410 1010 425 1045L395 1065L460 1050L355 940M240 1170L340 1110M340 1100V1140Q350 1165 400 1165Q455 1165 460 1140V1100M378 1145V1160M412 1145V1160"/><ellipse cx="400" cy="1097" rx="60" ry="27"/><ellipse cx="400" cy="1100" rx="52" ry="19"/>
        <path d="M610 1230L590 1090Q640 1100 670 1145L690 1130Q700 1070 717 1040Q740 1060 740 1120L768 1170L755 1195L905 1250Q970 1290 963 1370Q940 1460 890 1475M600 1110L640 1155M705 1120Q695 1090 720 1060M610 1230L640 1210L650 1230L670 1210L690 1230L715 1205Q700 1180 735 1185L765 1170M610 1230Q640 1230 640 1260Q645 1310 665 1310Q690 1370 760 1380L740 1385L745 1400L780 1410Q690 1400 668 1475M640 1180Q655 1165 670 1180M700 1155Q715 1145 725 1160M760 1340L775 1395M795 1330L803 1405M868 1322Q820 1350 830 1405Q880 1405 912 1370M780 1410L845 1408M740 1430Q700 1420 710 1455L690 1475"/>
        <path d="M345 1475Q340 1460 310 1430Q290 1390 320 1380Q345 1380 380 1475M340 1380Q330 1270 390 1260Q460 1240 480 1320L495 1475M380 1265Q360 1350 410 1475M400 1260Q455 1350 465 1475M485 1330Q500 1280 530 1290Q560 1310 545 1360Q530 1410 498 1430M335 1250Q330 1200 350 1220L365 1235L390 1195L400 1220L415 1225L412 1250M340 1230L350 1275M300 1400L290 1390M515 1285V1300M540 1285L548 1292"/>
        <path d="M65 1105Q5 1150 25 1200L50 1220Q110 1200 92 1150ZM40 1205Q30 1170 55 1175Q75 1190 60 1215M0 1240L50 1225L155 1320Q150 1400 75 1410Q60 1430 0 1432M50 1225Q70 1290 150 1325M0 1350L30 1330L45 1370Q60 1360 90 1365Q85 1400 60 1405L0 1420M0 1370Q30 1340 40 1405M115 1475Q130 1450 160 1460L270 1475M480 915L500 900H532Q520 920 480 915M600 900Q700 970 765 900M760 900L770 980Q780 995 805 900M990 900Q1010 930 1035 900M1085 955Q1080 910 1115 905H1195Q1190 950 1150 940Q1110 980 1085 955M1310 900L1297 940Q1310 965 1325 940L1345 915L1385 908L1405 965Q1425 975 1422 910L1455 905L1490 945Q1510 935 1490 900"/>
        <ellipse cx="935" cy="1057" rx="89" ry="110"/><path d="M915 1015Q930 1020 945 1025Q965 1010 970 1030Q965 1060 972 1080Q960 1100 945 1090L925 1110L918 1080Q890 1070 895 1055Q915 1040 915 1015"/>
        <path d="M1205 1130Q1190 1100 1195 1050Q1200 1000 1250 992Q1300 985 1315 1040Q1310 1060 1290 1055Q1270 1040 1255 1060L1275 1100L1250 1110Q1230 1080 1225 1115M1310 1045Q1300 1090 1330 1105Q1320 1120 1320 1130M1205 1130L1185 1145Q1110 1130 1005 1270L1125 1360L1170 1280M1185 1145Q1210 1210 1255 1210Q1280 1200 1275 1180L1330 1225M1020 1285Q980 1380 1010 1440Q1050 1500 1130 1460Q1190 1370 1230 1365Q1300 1380 1305 1475M1125 1360L1100 1385M1150 1320Q1220 1300 1250 1360M1250 1130Q1300 1100 1325 1140Q1320 1180 1280 1170Q1250 1170 1250 1130M1290 1140L1305 1145M1010 1440L1005 1475"/>
        <ellipse cx="1405" cy="1328" rx="130" ry="128"/><path d="M1323 1348Q1330 1450 1400 1458Q1490 1450 1485 1368M1347 1328Q1350 1270 1380 1328M1435 1338Q1445 1280 1468 1340M1465 1425L1500 1475Q1530 1450 1500 1405M1480 1410L1510 1450M1400 1135L1435 1060L1460 1075L1465 1045Q1490 1035 1485 1065L1480 1085L1490 1100L1460 1175ZM1440 1130L1450 1105M1550 1160L1535 1210Q1535 1230 1555 1232"/>
        <use href="#s" x="672" y="3"/><use href="#s" x="1004" y="40"/><use href="#s" x="538" y="85"/><use href="#s" x="624" y="90"/><use href="#s" x="1078" y="90"/><use href="#l" x="1528" y="50"/><ellipse cx="43" cy="107" rx="42" ry="50"/><ellipse cx="43" cy="107" rx="24" ry="30"/><use href="#s" x="112" y="236"/><use href="#l" x="112" y="632"/><use href="#s" x="119" y="740"/><ellipse cx="35" cy="810" rx="14" ry="16"/><use href="#s" x="72" y="1014"/><use href="#s" x="425" y="938"/><use href="#m" x="539" y="1040"/><use href="#s" x="638" y="1005"/><use href="#s" x="787" y="1058"/><use href="#s" x="818" y="1163"/><use href="#s" x="521" y="1188"/><use href="#s" x="236" y="1248"/><use href="#m" x="225" y="1360"/><use href="#m" x="971" y="1225"/><use href="#m" x="606" y="1384"/><use href="#m" x="1138" y="1028"/><use href="#s" x="1078" y="1100"/><use href="#s" x="1242" y="914"/><use href="#s" x="1384" y="1024"/><use href="#s" x="1518" y="1015"/>
      </g>
      <g transform="matrix(.3693 0 0 .3333 600 1900)">
        <path d="M1025 0L985 95L1085 138M1045 0L1022 38L1145 98L1190 0M1205 0L1155 110M1370 0L1430 68L1485 0M1270 60Q1290 40 1275 0L1310 20Q1350 0 1352 40Q1340 70 1320 60L1330 90Q1290 70 1278 100Q1260 80 1270 60M1290 55Q1310 30 1315 50L1300 75"/>
        <ellipse cx="924" cy="115" rx="35" ry="39"/><path d="M947 145L973 175M862 225Q880 240 928 222Q910 260 932 300Q900 285 862 300M1090 285Q1060 210 1057 150L1075 140L1205 113Q1225 115 1230 140L1245 205M1090 285L1165 272M1090 285L1110 198L1145 235L1160 207L1190 240M1265 170L1348 242L1280 318Q1265 320 1265 285Q1190 280 1140 335Q1150 215 1262 207ZM1385 200Q1420 170 1450 200L1465 212L1525 130L1568 115M1385 200Q1380 260 1440 310Q1480 330 1520 300L1568 240M1388 220Q1450 230 1480 318M1500 160L1530 170"/><use href="#m" x="1195" y="156"/>
        <path d="M985 330L1040 312Q1035 370 1070 425Q1060 480 1100 540L1135 648L1080 665Q1080 600 1045 550Q1010 500 1015 440Q1010 380 985 330M1015 445L1070 425M1050 555L1100 540M903 382Q920 330 995 338Q1010 350 1003 360Q960 350 903 382M1045 545Q1000 490 945 562Q990 540 1045 545Q1000 560 965 612Q1020 590 1045 555M1093 412L1145 395Q1130 440 1175 510Q1165 560 1215 618L1157 638Q1160 570 1125 520Q1130 460 1093 412M1125 525L1175 510M1135 400Q1190 380 1218 418Q1180 400 1140 415Q1170 460 1215 460Q1190 425 1140 415M1357 335Q1380 355 1430 340Q1410 380 1425 415Q1390 400 1352 415Q1370 380 1357 335"/>
        <ellipse cx="1391" cy="602" rx="126" ry="143"/><path d="M1340 470Q1320 500 1315 550M1410 460Q1450 500 1452 560M1330 562L1440 500L1480 520M1315 580Q1320 640 1360 680M1270 630L1435 575M1465 580Q1490 660 1440 735M1355 695L1295 712M1385 688L1510 620"/><ellipse cx="1315" cy="565" rx="15" ry="16"/><ellipse cx="1452" cy="571" rx="15" ry="16"/><ellipse cx="1369" cy="693" rx="15" ry="16"/>
        <path d="M105 660Q90 720 140 738L330 763Q380 750 385 660M140 740L135 763M155 655V710Q165 725 175 710L180 655M245 655V715Q260 735 265 710V655M290 655L275 720Q320 745 345 710Q350 685 320 680L345 655M720 655Q730 705 765 705Q790 700 795 655M665 763Q640 715 690 700Q770 710 830 763M705 763Q700 730 730 730L750 763M500 763Q545 700 595 763M1185 763L1215 740L1240 763M525 655L530 672L575 655M0 655L20 705Q40 705 35 680L20 655M0 805Q30 810 10 840Q30 860 5 880"/><ellipse cx="853" cy="686" rx="51" ry="56"/><ellipse cx="926" cy="755" rx="38" ry="42"/>
        <path d="M1440 920L1490 865Q1530 920 1500 975L1470 990M1455 980Q1445 940 1470 935Q1490 945 1480 985M1475 990L1568 1060M1475 990Q1490 1050 1568 1075M1370 1125Q1375 1190 1460 1192Q1540 1180 1568 1110M1400 1110Q1410 1160 1440 1155L1425 1110M1455 1110Q1430 1160 1475 1158L1500 1115M1470 1150L1510 1125"/>
        <path d="M125 1095L130 1110Q100 1120 110 1140L135 1145V1165L160 1160Q175 1180 190 1172L195 1155L220 1150Q225 1130 205 1130L215 1110M285 1130Q290 1200 330 1235M285 1130Q340 1135 355 1170Q410 1150 430 1200L450 1235M355 1170Q370 1210 360 1235M395 1235Q430 1200 460 1235M715 1110Q720 1130 750 1140Q755 1150 735 1155Q770 1155 768 1175Q765 1205 700 1203Q665 1190 680 1170Q680 1155 705 1155Q690 1140 715 1110M830 1235L920 1180L908 1150Q905 1130 920 1145L935 1160Q935 1120 950 1130L950 1160L970 1135Q980 1145 965 1175L935 1190L965 1235"/>
        <path d="M1020 1110Q1000 1170 1015 1235M1215 1110Q1225 1180 1210 1235M1015 1130L1185 1215M1075 1110Q1090 1130 1140 1115M1025 1235Q1020 1190 1055 1188Q1085 1190 1090 1235M1058 1115Q1055 1160 1065 1180M80 980Q60 970 85 920M0 980Q70 1020 72 1130Q60 1200 30 1235"/>
        <use href="#s" x="883" y="24"/><use href="#m" x="1368" y="141"/><use href="#s" x="1018" y="243"/><use href="#s" x="1271" y="387"/><use href="#l" x="1535" y="393"/><use href="#s" x="907" y="481"/><use href="#m" x="855" y="545"/><use href="#s" x="1002" y="677"/><use href="#m" x="1106" y="742"/><use href="#s" x="616" y="693"/><use href="#m" x="454" y="670"/><use href="#s" x="53" y="775"/><use href="#s" x="1494" y="774"/><use href="#l" x="559" y="1167"/><use href="#s" x="847" y="1145"/><use href="#s" x="1285" y="1128"/><use href="#s" x="467" y="1105"/>
      </g>
    </svg>

    <div class="pill monday">Monday</div>

    <div class="bubble in b1"><p class="text">He msgd me</p><span class="time">2:14 PM</span></div>
    <div class="bubble in b2"><p class="text">In the morning</p><span class="time">2:14 PM</span></div>
    <div class="bubble in wide b3"><p class="text">Just casual talk he did it msgd me for<br>2 min and then he stopped replying<br>again but i am happy at least he msg<br>me</p><span class="time">2:15 PM</span></div>
    <div class="bubble in b4"><p class="text">Thank you</p><span class="time">2:15 PM</span>
      <svg class="tail" viewBox="0 0 52 50" width="52" height="50"><path d="M17 0C17 30 8 42 0 49.500Q18 49.500 32 43L52 16V0Z"/></svg>
    </div>

    <div class="pill yesterday">Yesterday</div>

    <div class="bubble out reply">
      <div class="quote">
        <div class="quote-name">MD Rukhiya</div>
        <p class="quote-text">Just casual talk he did it msgd me for 2 min<br>and then he stopped replying again but i am<br>happy at least he msg me</p>
      </div>
      <p class="text">That's a positive sign Rukhiya</p>
      <span class="time">8:06 PM<svg class="checks" viewBox="0 0 42 29" width="42" height="29"><path d="M2 20.500L10 27L28.500 2M18.500 24L22 27L40 2"/></svg></span>
      <svg class="tail" viewBox="0 0 52 50" width="52" height="50"><path d="M17 0C17 30 8 42 0 49.500Q18 49.500 32 43L52 16V0Z"/></svg>
    </div>

    <div class="bubble in wide b6"><p class="text">Thank you for you reply I appreciate<br>that it.<br>Sure will wait for ur&nbsp; reply</p><span class="time">8:11 PM</span>
      <svg class="tail" viewBox="0 0 52 50" width="52" height="50"><path d="M17 0C17 30 8 42 0 49.500Q18 49.500 32 43L52 16V0Z"/></svg>
    </div>

    <div class="bubble out b7"><p class="text">Thank you</p>
      <span class="time">8:15 PM<svg class="checks" viewBox="0 0 42 29" width="42" height="29"><path d="M2 20.500L10 27L28.500 2M18.500 24L22 27L40 2"/></svg></span>
      <svg class="tail" viewBox="0 0 52 50" width="52" height="50"><path d="M17 0C17 30 8 42 0 49.500Q18 49.500 32 43L52 16V0Z"/></svg>
    </div>
    <div class="scrollbar"></div>
  </main>

  <footer class="composer">
    <div class="tools">
      <svg class="line-icon plus" viewBox="0 0 60 60" width="60" height="60"><path d="M30 3V57M3 30H57"/></svg>
      <div class="field">
        <svg class="line-icon sticker" viewBox="0 0 56 56" width="56" height="56"><path d="M53.500 22Q54 34 48 41Q44 46 37 51Q31 54 22 54Q2 53 2 28Q2 2 24 2H32Q53.500 3 53.500 22ZM31 53Q30 50 30.500 41Q32 31 41 31Q49 31 52.500 29"/></svg>
      </div>
      <svg class="line-icon camera" viewBox="0 0 70 55" width="70" height="55"><path d="M2.500 14Q2.500 9.500 8 9.500H20Q22 9.500 25 5Q27 2.500 29 2.500H40Q43 2.500 45 5Q48 9.500 51 9.500H62Q67 9.500 67 14V48Q67 52 63 52H7Q2.500 52 2.500 47Z"/><circle cx="34.500" cy="30" r="13.500"/><circle class="flash" cx="54.500" cy="19.500" r="3.500"/></svg>
      <svg class="line-icon mic" viewBox="0 0 48 70" width="48" height="70"><rect x="13" y="2.500" width="21.500" height="43.500" rx="10.750"/><path d="M2.500 35Q4 57 24 57T45.500 35M24 57V67.500"/></svg>
    </div>
    <div class="home"></div>
  </footer>
</div>
</body>
</html>
```
FILE: styles.css
```css
* { box-sizing: border-box; }
body { margin: 0; font-family: Inter, "Liberation Sans", sans-serif; color: #000; }
svg { display: block; flex: none; }
p { margin: 0; }

.screen { width: 1179px; height: 2556px; display: flex; flex-direction: column; overflow: hidden; }

.top {
  height: 294px; flex: none; border-bottom: 1px solid #a5a4a3;
  background:
    linear-gradient(90deg, #fbfaf8 0, rgba(251,250,248,0) 130px),
    radial-gradient(ellipse 640px 330px at 390px 0, #f1f1f1 0, #f4f4f4 40%, #f8f8f8 70%, rgba(254,253,252,0) 100%),
    #fefdfc;
}
.status { height: 134px; padding: 67px 0 0 133px; display: flex; align-items: flex-start; }
.clock { width: 119.500px; font-size: 51px; line-height: 42px; font-weight: 600; letter-spacing: -1px; white-space: nowrap; }
.bell .slash { fill: none; stroke: #000; stroke-width: 3.500; stroke-linecap: round; }
.signal { margin: 2px 0 0 553.500px; }
.wifi { margin: 2px 0 0 22.500px; }
.battery { width: 75px; height: 41px; margin-left: 22.500px; border-radius: 13px; background: linear-gradient(90deg, #fc0 56px, #cac9c8 56px); padding-left: 15px; }
.battery-label { display: block; font-size: 35px; line-height: 41px; font-weight: 700; letter-spacing: -.5px; }
.nub { margin: 14px 0 0 3px; fill: #cac9c8; }
.nav { height: 184px; display: flex; align-items: center; padding-left: 28px; }
.back path { fill: none; stroke: #0077b6; stroke-width: 7.500; stroke-linecap: round; stroke-linejoin: round; }
.count { width: 119px; margin-left: 30px; font-size: 50.500px; color: #0077b6; letter-spacing: -1.600px; }
.name { width: 530px; margin: 0 0 2px 31px; font-size: 47px; font-weight: 600; letter-spacing: -.2px; white-space: nowrap; }
.line-icon { fill: none; stroke: #0077b6; stroke-width: 4.700; stroke-linecap: round; stroke-linejoin: round; }
.line-icon path { vector-effect: non-scaling-stroke; }
.video { margin-left: 3px; }
.phone { margin-left: 74px; margin-bottom: 3px; }

.chat { position: relative; height: 2018px; flex: none; padding: 35px 48px 0; background: #eae5df; display: flex; flex-direction: column; align-items: flex-start; overflow: hidden; }
.doodles { position: absolute; left: 0; top: 0; fill: none; stroke: #f2eeea; stroke-width: 3; stroke-linejoin: round; stroke-linecap: round; }
.doodles path, .doodles ellipse, .doodles circle { vector-effect: non-scaling-stroke; }
.solid { fill: #f2eeea; stroke: none; }
.digits { font-size: 48px; font-weight: 700; }

.pill { position: relative; align-self: center; height: 63px; border-radius: 24px; background: #f5f5f5; color: #4a4a50; font-size: 35.500px; line-height: 65px; font-weight: 600; text-align: center; box-shadow: 0 2px 1px rgba(0,0,0,.13); padding-right: 4px; }
.monday { width: 200px; margin-left: 3px; margin-bottom: 34px; }
.yesterday { width: 300px; margin: 105.500px 0 39.500px 2px; }

.bubble { position: relative; display: flex; flex-direction: column; align-items: flex-start; padding: 16.300px 33px 19px 30.500px; border-radius: 34px; margin-bottom: 10.200px; filter: drop-shadow(0 2px 1px rgba(0,0,0,.12)); flex: none; }
.in { background: #fff; }
.out { background: #e1fed2; align-self: flex-end; }
.b1 { width: 498px; }
.b2 { width: 537px; }
.wide { width: 870px; }
.b3 { height: 338px; }
.b3 .time { margin-top: -35.300px; }
.b4 { width: 450px; margin-bottom: 0; }
.text { font-size: 47px; line-height: 74.500px; letter-spacing: -.57px; white-space: nowrap; }
.time { align-self: flex-end; display: flex; align-items: center; margin-top: -36.600px; height: 40px; font-size: 33px; line-height: 40px; color: #8a8a8e; white-space: nowrap; font-variant-numeric: tabular-nums; letter-spacing: -.2px; word-spacing: -4px; }
.out .time { color: #82917c; margin-right: -3px; }
.checks { margin: 0 0 0 10px; overflow: visible; }
.checks path { fill: none; stroke: #a0b495; stroke-width: 4; stroke-linecap: round; stroke-linejoin: round; }
.tail { position: absolute; left: -17px; bottom: 0; fill: #fff; }
.out .tail { left: auto; right: -17px; fill: #e1fed2; transform: scaleX(-1); }

.reply { width: 870px; height: 476.500px; padding-top: 12px; margin-bottom: 36px; }
.quote { width: 846px; height: 302px; margin-left: -18.500px; padding: 51px 0 0 39.500px; border-radius: 22px; background: linear-gradient(90deg, #1faa00 12px, #cce6bf 12px); }
.quote-name { font-size: 41px; line-height: 20px; font-weight: 600; color: #1a9f04; letter-spacing: .15px; }
.quote-text { margin-top: 28px; font-size: 35px; line-height: 56px; color: #2a3128; letter-spacing: .4px; white-space: nowrap; }
.reply .text { margin-top: 15px; }
.reply .time { margin-top: 13.500px; }
.b6 { height: 264px; margin-bottom: 35.500px; }
.b6 .time { margin-top: -34.800px; }
.b7 { width: 498px; height: 114px; }
.scrollbar { position: absolute; left: 1161px; top: 1637px; width: 9px; height: 373px; border-radius: 5px; background: #979490; }

.composer { flex: 1; background: #f5f5f5; border-top: 1px solid #a9a9ab; display: flex; flex-direction: column; align-items: center; }
.tools { width: 1179px; height: 140px; padding-left: 40px; display: flex; align-items: center; }
.plus { stroke-width: 5.800; }
.field { width: 756px; height: 99px; margin-left: 41px; border: 1px solid #b3b3b3; border-radius: 50px; background: #fff; display: flex; align-items: center; justify-content: flex-end; padding-right: 22px; }
.sticker { stroke-width: 4; }
.camera { margin-left: 55.500px; }
.mic { margin-left: 57.500px; }
.flash { fill: #0077b6; stroke: none; }
.home { width: 420px; height: 15px; margin-top: 64px; border-radius: 8px; background: #000; }
```
